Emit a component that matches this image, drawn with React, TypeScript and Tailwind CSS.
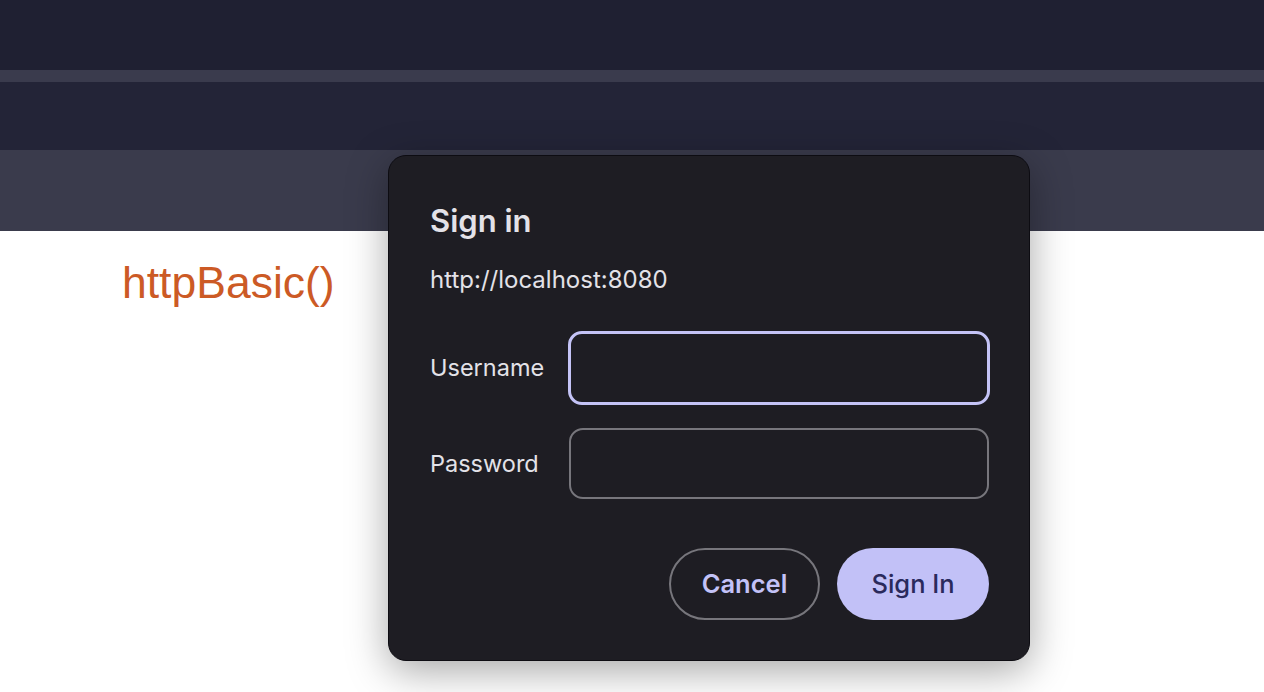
const App = () => {
  return (
    <div className="relative w-[1264px] h-[692px] overflow-hidden bg-white">
      {/* Browser-ish header bands */}
      <div className="h-[70px] bg-[#1f2032]" />
      <div className="h-[12px] bg-[#3a3b4d]" />
      <div className="h-[68px] bg-[#232437]" />
      <div className="h-[81px] bg-[#3a3b4c]" />

      {/* Page content */}
      <div className="pl-[122px] pt-[26px]">
        <h1 className="text-[44.5px] leading-[52px] text-[#cc5a25] font-['Liberation_Sans',Arial,sans-serif]">
          httpBasic()
        </h1>
      </div>

      {/* Sign in dialog */}
      <div className="absolute left-[388px] top-[155px] w-[642px] h-[506px] rounded-[18px] bg-[#1e1d23] border border-[#0d0c12] shadow-[0_10px_40px_rgba(0,0,0,0.35)] pl-[41px] pr-[40px] pt-[46px] font-['Inter',sans-serif]">
        <h2 className="text-[31px] leading-[38px] font-semibold text-[#e3e2e8]">Sign in</h2>
        <p className="mt-[25px] text-[24px] leading-[30px] text-[#e3e2e8]">http://localhost:8080</p>

        <div className="mt-[36px] flex flex-col gap-[23px]">
          <div className="flex items-center h-[74px]">
            <label className="w-[138px] shrink-0 text-[23.5px] text-[#e3e2e8]">Username</label>
            <input
              type="text"
              className="w-[422px] h-[74px] shrink-0 rounded-[14px] border-[3px] border-[#c4c3f6] bg-transparent outline-none"
            />
          </div>
          <div className="flex items-center h-[71px]">
            <label className="w-[139px] shrink-0 text-[23.5px] text-[#e3e2e8]">Password</label>
            <input
              type="password"
              className="w-[420px] h-[71px] shrink-0 rounded-[14px] border-2 border-[#77767c] bg-transparent outline-none"
            />
          </div>
        </div>

        <div className="mt-[49px] flex justify-end gap-[17px]">
          <button className="w-[151px] h-[72px] rounded-full border-2 border-[#77767c] text-[25.5px] font-semibold text-[#c3c2f7]">
            Cancel
          </button>
          <button className="w-[152px] h-[72px] rounded-full bg-[#c2c1f7] text-[25.5px] font-medium text-[#2a2a5c]">
            Sign In
          </button>
        </div>
      </div>
    </div>
  );
};

export default App;
